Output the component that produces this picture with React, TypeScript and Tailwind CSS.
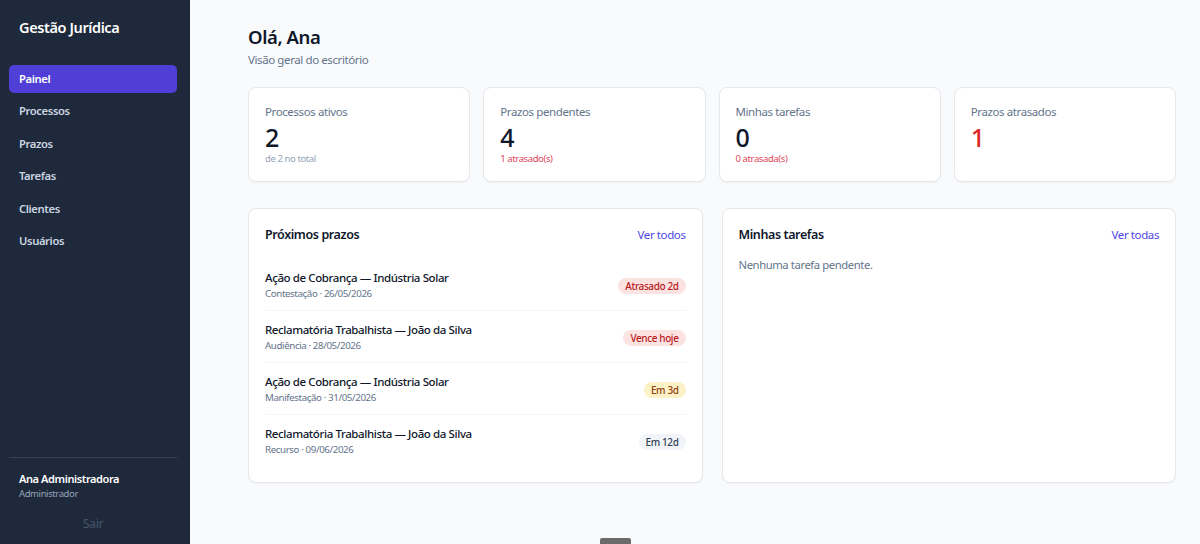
import React from "react";

const nav = ["Painel", "Processos", "Prazos", "Tarefas", "Clientes", "Usuários"];

const stats = [
  { label: "Processos ativos", value: "2", sub: "de 2 no total", valueCls: "text-[#0f172a]", subCls: "text-[#94a3b8]" },
  { label: "Prazos pendentes", value: "4", sub: "1 atrasado(s)", valueCls: "text-[#0f172a]", subCls: "text-[#e0475a]" },
  { label: "Minhas tarefas", value: "0", sub: "0 atrasada(s)", valueCls: "text-[#0f172a]", subCls: "text-[#e0475a]" },
  { label: "Prazos atrasados", value: "1", sub: "", valueCls: "text-[#dc2626]", subCls: "" },
];

const prazos = [
  { title: "Ação de Cobrança — Indústria Solar", sub: "Contestação · 26/05/2026", badge: "Atrasado 2d", cls: "bg-[#fde2e2] text-[#b91c1c]" },
  { title: "Reclamatória Trabalhista — João da Silva", sub: "Audiência · 28/05/2026", badge: "Vence hoje", cls: "bg-[#fde2e2] text-[#b91c1c]" },
  { title: "Ação de Cobrança — Indústria Solar", sub: "Manifestação · 31/05/2026", badge: "Em 3d", cls: "bg-[#fdf1c7] text-[#92400e]" },
  { title: "Reclamatória Trabalhista — João da Silva", sub: "Recurso · 09/06/2026", badge: "Em 12d", cls: "bg-[#f1f5f9] text-[#334155]" },
];

export default function App() {
  return (
    <div
      className="relative flex h-[544px] w-[1200px] overflow-hidden bg-[#f8fafc] tracking-[-0.025em]"
      style={{ fontFamily: '"Noto Sans", "Open Sans", sans-serif' }}
    >
      <aside className="flex h-full w-[190px] shrink-0 flex-col bg-[#1e293b] pl-[9px] pr-[13px]">
        <div className="mt-[15px] px-[10px] text-[14.5px] font-semibold leading-[24px] text-white">Gestão Jurídica</div>
        <nav className="mt-[26px] flex flex-col gap-[4.5px]">
          {nav.map((n, i) => (
            <div
              key={n}
              className={
                "flex h-[28px] items-center rounded-[5px] px-[10px] text-[11.25px] font-semibold " +
                (i === 0 ? "bg-[#4f3fd6] text-white" : "text-[#cbd5e1]")
              }
            >
              {n}
            </div>
          ))}
        </nav>
        <div className="mt-auto border-t border-[#334155] px-[10px] pt-[13px]">
          <div className="text-[11px] font-semibold leading-[16px] text-white">Ana Administradora</div>
          <div className="text-[9.5px] leading-[13px] text-[#94a3b8]">Administrador</div>
          <div className="mb-[11px] mt-[15px] text-center text-[12.5px] leading-[18px] text-[#475569]">Sair</div>
        </div>
      </aside>

      <main className="flex-1 pl-[58px] pr-[24px] pt-[24px]">
        <h1 className="text-[18.5px] font-semibold leading-[26px] text-[#0f172a]">Olá, Ana</h1>
        <p className="mt-[2px] text-[11.5px] leading-[16px] text-[#64748b]">Visão geral do escritório</p>

        <div className="mt-[19px] grid grid-cols-4 gap-[13px]">
          {stats.map((s) => (
            <div
              key={s.label}
              className="h-[95px] rounded-[8px] border border-[#e5e7eb] bg-white px-[16px] pt-[15px] shadow-[0_1px_2px_rgba(0,0,0,0.04)]"
            >
              <div className="text-[11.5px] leading-[18px] text-[#64748b]">{s.label}</div>
              <div className={"mt-[1px] text-[25px] font-medium leading-[30px] tracking-normal " + s.valueCls}>{s.value}</div>
              {s.sub && <div className={"text-[9.5px] leading-[13px] " + s.subCls}>{s.sub}</div>}
            </div>
          ))}
        </div>

        <div className="mt-[26px] grid grid-cols-2 gap-[19px]">
          <section className="rounded-[8px] border border-[#e5e7eb] bg-white px-[16px] pb-[16px] pt-[15px] shadow-[0_1px_2px_rgba(0,0,0,0.04)]">
            <div className="flex items-center justify-between leading-[22px]">
              <h2 className="text-[12.5px] font-semibold text-[#0f172a]">Próximos prazos</h2>
              <span className="text-[11.5px] text-[#4f46e5]">Ver todos</span>
            </div>
            <ul className="mt-[13px]">
              {prazos.map((p, i) => (
                <li
                  key={i}
                  className={
                    "flex items-center justify-between pb-[8px] pt-[11px] " +
                    (i < prazos.length - 1 ? "border-b border-[#f1f5f9]" : "")
                  }
                >
                  <div>
                    <div className="text-[11.5px] font-medium leading-[16px] text-[#0f172a]">{p.title}</div>
                    <div className="text-[9.75px] leading-[16px] text-[#64748b]">{p.sub}</div>
                  </div>
                  <span className={"rounded-full px-[7px] text-[10px] font-medium leading-[16px] " + p.cls}>
                    {p.badge}
                  </span>
                </li>
              ))}
            </ul>
          </section>

          <section className="rounded-[8px] border border-[#e5e7eb] bg-white px-[16px] pt-[15px] shadow-[0_1px_2px_rgba(0,0,0,0.04)]">
            <div className="flex items-center justify-between leading-[22px]">
              <h2 className="text-[12.5px] font-semibold text-[#0f172a]">Minhas tarefas</h2>
              <span className="text-[11.5px] text-[#4f46e5]">Ver todas</span>
            </div>
            <p className="mt-[10px] text-[11.25px] leading-[18px] text-[#64748b]">Nenhuma tarefa pendente.</p>
          </section>
        </div>
      </main>

      <div className="absolute bottom-0 left-[600px] h-[6px] w-[31px] rounded-t-[2px] bg-[#6b6b6b]" />
    </div>
  );
}
